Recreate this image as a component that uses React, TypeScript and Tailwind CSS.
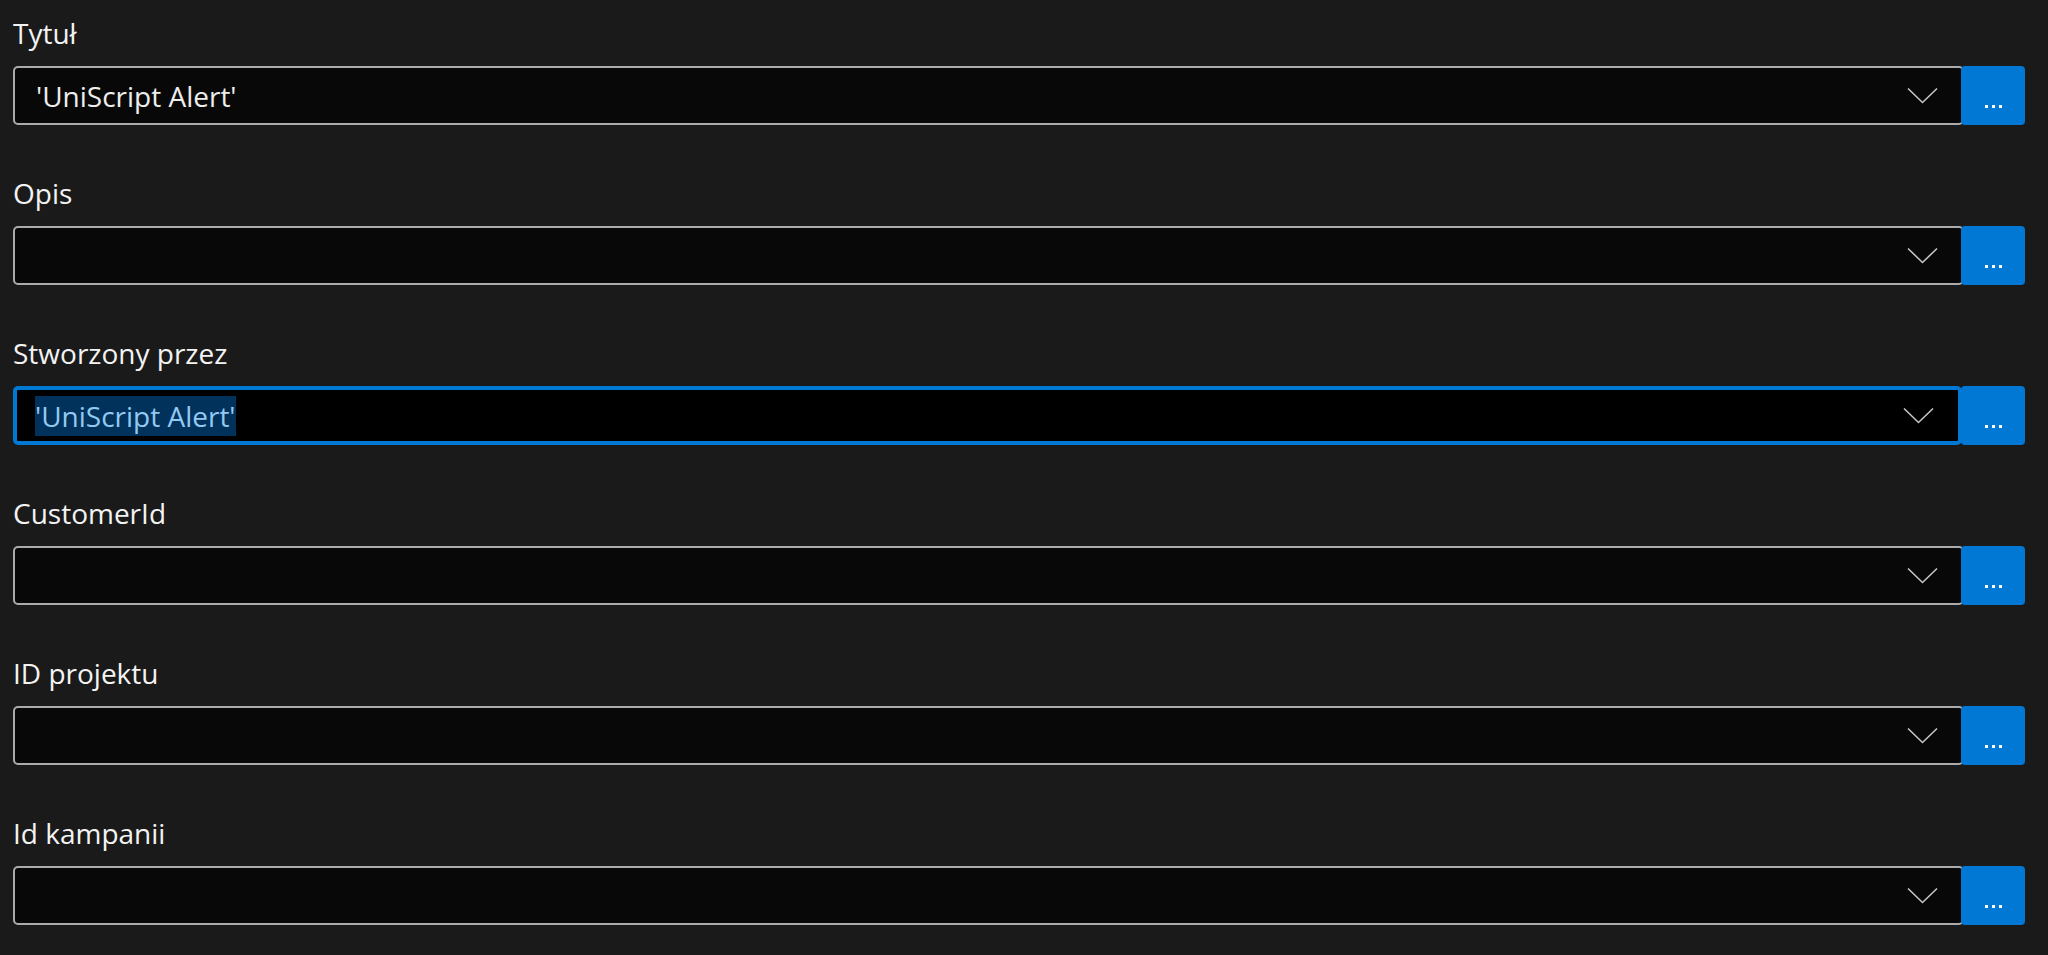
import React from "react";

type Field = {
  label: string;
  value?: string;
  focused?: boolean;
};

const fields: Field[] = [
  { label: "Tytuł", value: "'UniScript Alert'" },
  { label: "Opis" },
  { label: "Stworzony przez", value: "'UniScript Alert'", focused: true },
  { label: "CustomerId" },
  { label: "ID projektu" },
  { label: "Id kampanii" },
];

function Chevron() {
  return (
    <svg width="31" height="17" viewBox="0 0 31 17" fill="none" className="shrink-0">
      <path d="M1 1.5 L15.5 15.5 L30 1.5" stroke="#c4c4c4" strokeWidth="1.6" />
    </svg>
  );
}

function MoreButton() {
  return (
    <button
      type="button"
      className="relative z-10 -ml-[3px] flex h-[59px] w-[64px] shrink-0 items-end justify-center gap-[4px] rounded-[4px] bg-[#0078d4] pb-[17px]"
      aria-label="Więcej"
    >
      <span className="h-[3px] w-[3px] bg-white" />
      <span className="h-[3px] w-[3px] bg-white" />
      <span className="h-[3px] w-[3px] bg-white" />
    </button>
  );
}

function FieldRow({ field }: { field: Field }) {
  const box = field.focused
    ? "border-[4px] border-[#0078d4] bg-black pl-[18px] mr-[2px]"
    : "border-2 border-[#ababab] bg-[#080808] pl-[21px]";

  return (
    <div className="flex flex-col">
      <label className="h-[40px] text-[28px] leading-[40px] text-[#f3f3f3]">{field.label}</label>
      <div className="mt-[13px] flex items-center">
        <div
          className={`flex h-[59px] min-w-0 flex-1 items-center justify-between rounded-[5px] pr-[24px] ${box}`}
        >
          {field.value ? (
            field.focused ? (
              <span className="mt-[1px] bg-[#01325c] text-[28px] leading-[40px] text-[#92c9f2]">
                {field.value}
              </span>
            ) : (
              <span className="mt-[1px] text-[28px] leading-[40px] text-[#ededed]">{field.value}</span>
            )
          ) : (
            <span />
          )}
          <Chevron />
        </div>
        <MoreButton />
      </div>
    </div>
  );
}

export default function App() {
  return (
    <div
      className="min-h-[955px] w-[2048px] bg-[#1a1a1a] pl-[13px] pr-[23px] pt-[13px]"
      style={{ fontFamily: '"Open Sans", "Noto Sans", sans-serif' }}
    >
      <div className="flex flex-col gap-[48px]">
        {fields.map((f) => (
          <FieldRow key={f.label} field={f} />
        ))}
      </div>
    </div>
  );
}
